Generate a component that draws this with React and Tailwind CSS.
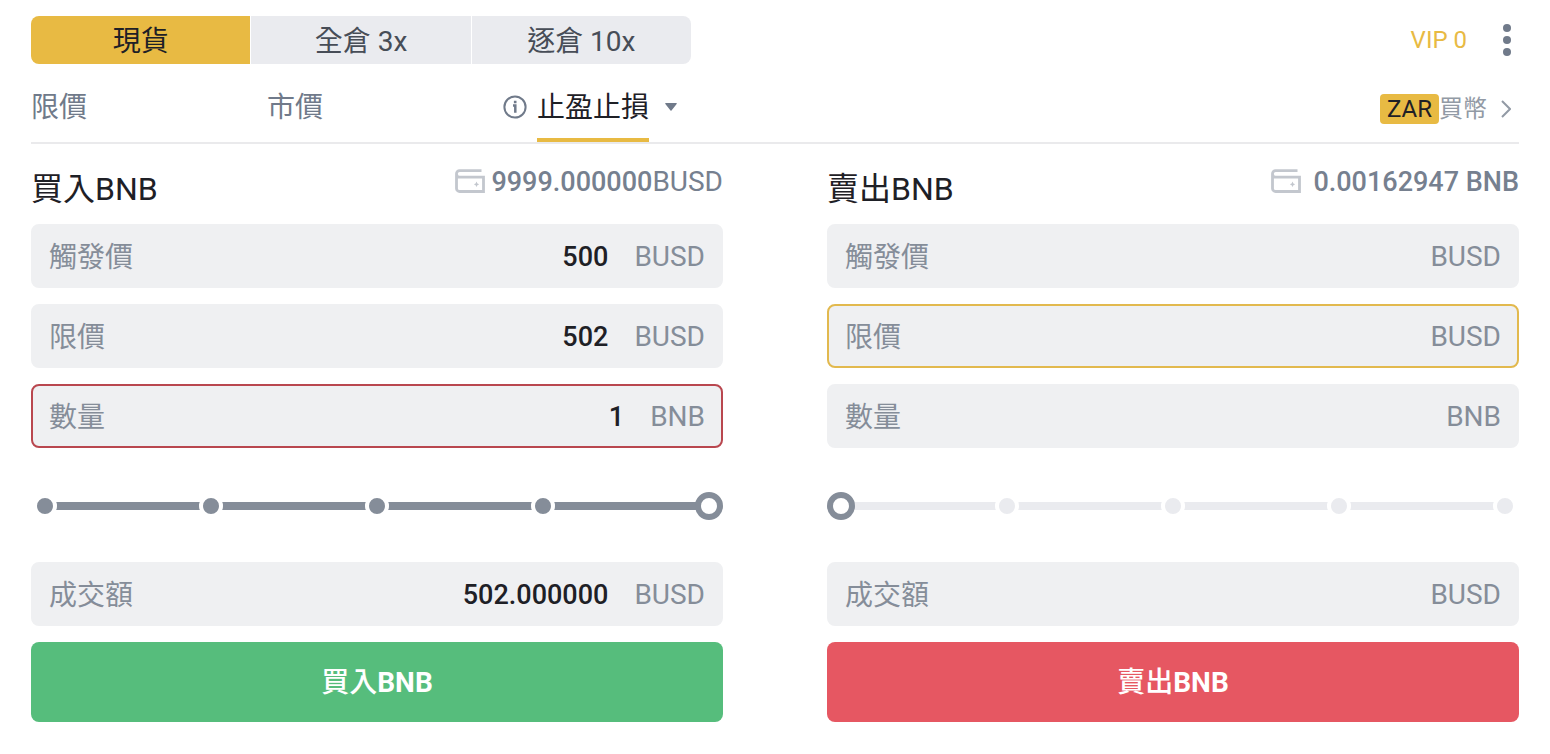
import { useId, useState } from 'react';

const accountTabs = ['現貨', '全倉 3x', '逐倉 10x'];

function InfoIcon() {
  return (
    <svg viewBox="0 0 24 24" className="size-6 shrink-0" fill="none" stroke="currentColor" strokeWidth="2" aria-hidden="true">
      <circle cx="12" cy="12" r="10.6" />
      <path d="M10 10.600h2.300V17.800M10.900 7h2.600" strokeWidth="2.500" />
    </svg>
  );
}

function WalletIcon() {
  return (
    <svg viewBox="0 0 30 24" className="h-6 w-[30px] shrink-0 text-[#c3c7ce]" fill="none" stroke="currentColor" strokeWidth="2.800" aria-hidden="true">
      <path d="M26.5 1.6H4.6A3.1 3.1 0 0 0 1.5 4.7V19.400a3.100 3.100 0 0 0 3.100 3.100H28.500V8.200H4.600A3.100 3.100 0 0 1 1.600 5.200" />
      <path d="M21.500 12.600l.9 1.800 1.800.9-1.800.9-.9 1.800-.9-1.800-1.800-.9 1.800-.9z" fill="currentColor" stroke="none" />
    </svg>
  );
}

function AccountTabs() {
  const [active, setActive] = useState(0);
  return (
    <div role="tablist" className="grid h-12 w-[660px] max-w-full grid-cols-3 gap-px overflow-hidden rounded-lg">
      {accountTabs.map((label, i) => (
        <button
          key={label}
          type="button"
          role="tab"
          aria-selected={i === active}
          onClick={() => setActive(i)}
          className={`pt-1 ${i === active ? 'bg-[#e8ba43] text-[#1e2026]' : 'bg-[#eaebef] text-[#474d57]'}`}
        >
          {label}
        </button>
      ))}
    </div>
  );
}

function OrderTypes() {
  return (
    <nav className="flex items-stretch gap-[180px] text-[#707a8a]">
      <button type="button" className="pt-0.5">限價</button>
      <button type="button" className="pt-0.5">市價</button>
      <div className="flex items-center">
        <InfoIcon />
        <button type="button" className="ml-2.5 self-stretch border-y-4 border-t-transparent border-b-[#e8ba43] pt-0.5 text-[#1e2026]">
          止盈止損
        </button>
        <button type="button" aria-label="更多訂單類型" className="ml-4">
          <svg viewBox="0 0 12 8" className="h-2 w-3" fill="currentColor" aria-hidden="true">
            <path d="M0.800 0h10.400a.6.6 0 0 1 .45 1L6.500 7.500a.65.65 0 0 1-1 0L.35 1a.6.6 0 0 1 .45-1z" />
          </svg>
        </button>
      </div>
    </nav>
  );
}

function Field({ label, unit, defaultValue = '', tone = 'border-[#eff0f2]' }) {
  const id = useId();
  return (
    <div className={`flex h-16 items-center rounded-lg border-2 bg-[#eff0f2] px-4 pt-0.5 text-[#858d99] ${tone}`}>
      <label htmlFor={id} className="shrink-0 pt-0.5">{label}</label>
      <input
        id={id}
        type="text"
        inputMode="decimal"
        defaultValue={defaultValue}
        className="min-w-0 flex-1 bg-transparent text-right text-[27px] font-medium text-[#1e2026] outline-none"
      />
      <span className="ml-[26px] shrink-0">{unit}</span>
    </div>
  );
}

function PercentSlider({ initial, label }) {
  const [value, setValue] = useState(initial);
  return (
    <div className="grid items-center pt-7 pb-[26px]">
      <div className="mx-3.5 h-2 bg-[#eaebef] [grid-area:1/1]">
        <div className="h-full bg-[#858d99]" style={{ width: `${value}%` }} />
      </div>
      <div className="mx-0.5 flex justify-between [grid-area:1/1]">
        {[0, 25, 50, 75, 100].map((step) => (
          <span
            key={step}
            className={`size-6 rounded-full border-4 border-white ${step === value ? 'invisible' : step < value ? 'bg-[#858d99]' : 'bg-[#eaebef]'}`}
          />
        ))}
      </div>
      <input
        type="range"
        min="0"
        max="100"
        value={value}
        aria-label={label}
        onChange={(e) => setValue(Number(e.target.value))}
        className="z-10 m-0 h-7 w-full cursor-pointer appearance-none bg-transparent [grid-area:1/1] [&::-webkit-slider-thumb]:size-7 [&::-webkit-slider-thumb]:appearance-none [&::-webkit-slider-thumb]:rounded-full [&::-webkit-slider-thumb]:border-[6px] [&::-webkit-slider-thumb]:border-[#858d99] [&::-webkit-slider-thumb]:bg-white"
      />
    </div>
  );
}

function OrderForm({ title, balance, values = [], tones = [], percent, submitClass }) {
  return (
    <form className="min-w-0" onSubmit={(e) => e.preventDefault()}>
      <div className="flex items-start justify-between pt-5 pb-3">
        <h2 className="pt-0.5 text-[32px] leading-[46px] text-[#1e2026]">{title}</h2>
        <div className="flex items-center gap-1.5 text-[27px] leading-8 font-medium text-[#76808f]">
          <WalletIcon />
          <span className="pt-0.5 whitespace-pre">{balance}</span>
        </div>
      </div>
      <div className="flex flex-col gap-4">
        <Field label="觸發價" unit="BUSD" defaultValue={values[0]} tone={tones[0]} />
        <Field label="限價" unit="BUSD" defaultValue={values[1]} tone={tones[1]} />
        <Field label="數量" unit="BNB" defaultValue={values[2]} tone={tones[2]} />
        <PercentSlider initial={percent} label={`${title} %`} />
        <Field label="成交額" unit="BUSD" defaultValue={values[3]} tone={tones[3]} />
        <button type="submit" className={`h-20 rounded-lg pt-0.5 font-medium text-white ${submitClass}`}>
          {title.replace('BNB', '')}
          <span className="font-bold">BNB</span>
        </button>
      </div>
    </form>
  );
}

export default function App() {
  return (
    <main className="bg-white px-[31px] py-4 font-[Roboto,'Noto_Sans_CJK_TC',sans-serif] text-[28px] leading-10">
      <div className="flex items-center justify-between">
        <AccountTabs />
        <div className="flex items-center gap-8 pr-1">
          <a href="#vip" className="text-2xl text-[#e8ba43]">VIP 0</a>
          <button type="button" aria-label="更多">
            <svg viewBox="0 0 16 32" className="h-8 w-4 text-[#707a8a]" fill="currentColor" aria-hidden="true">
              <circle cx="8" cy="4" r="4" />
              <circle cx="8" cy="16" r="4" />
              <circle cx="8" cy="28" r="4" />
            </svg>
          </button>
        </div>
      </div>

      <div className="mt-2 flex h-[72px] justify-between border-b-2 border-[#eaeaec]">
        <OrderTypes />
        <a href="#buy" className="flex items-center pt-1 pr-2 text-2xl text-[#929aa5]">
          <span className="rounded-sm bg-[#e8ba43] px-[7px] leading-[30px] text-[#1e2026]">ZAR</span>
          買幣
          <svg viewBox="0 0 10 18" className="ml-3.5 h-[18px] w-2.5" fill="none" stroke="currentColor" strokeWidth="2" aria-hidden="true">
            <path d="M1 1l8 8-8 8" />
          </svg>
        </a>
      </div>

      <div className="grid grid-cols-2 gap-[104px]">
        <OrderForm
          title="買入BNB"
          balance={<>9999.000000<span className="text-[28px] font-normal">BUSD</span></>}
          values={['500', '502', '1', '502.000000']}
          tones={[undefined, undefined, 'border-[#b9474f]']}
          percent={100}
          submitClass="bg-[#56bd7c]"
        />
        <OrderForm
          title="賣出BNB"
          balance=" 0.00162947 BNB"
          tones={[undefined, 'border-[#e2b94e]']}
          percent={0}
          submitClass="bg-[#e65762]"
        />
      </div>
    </main>
  );
}
